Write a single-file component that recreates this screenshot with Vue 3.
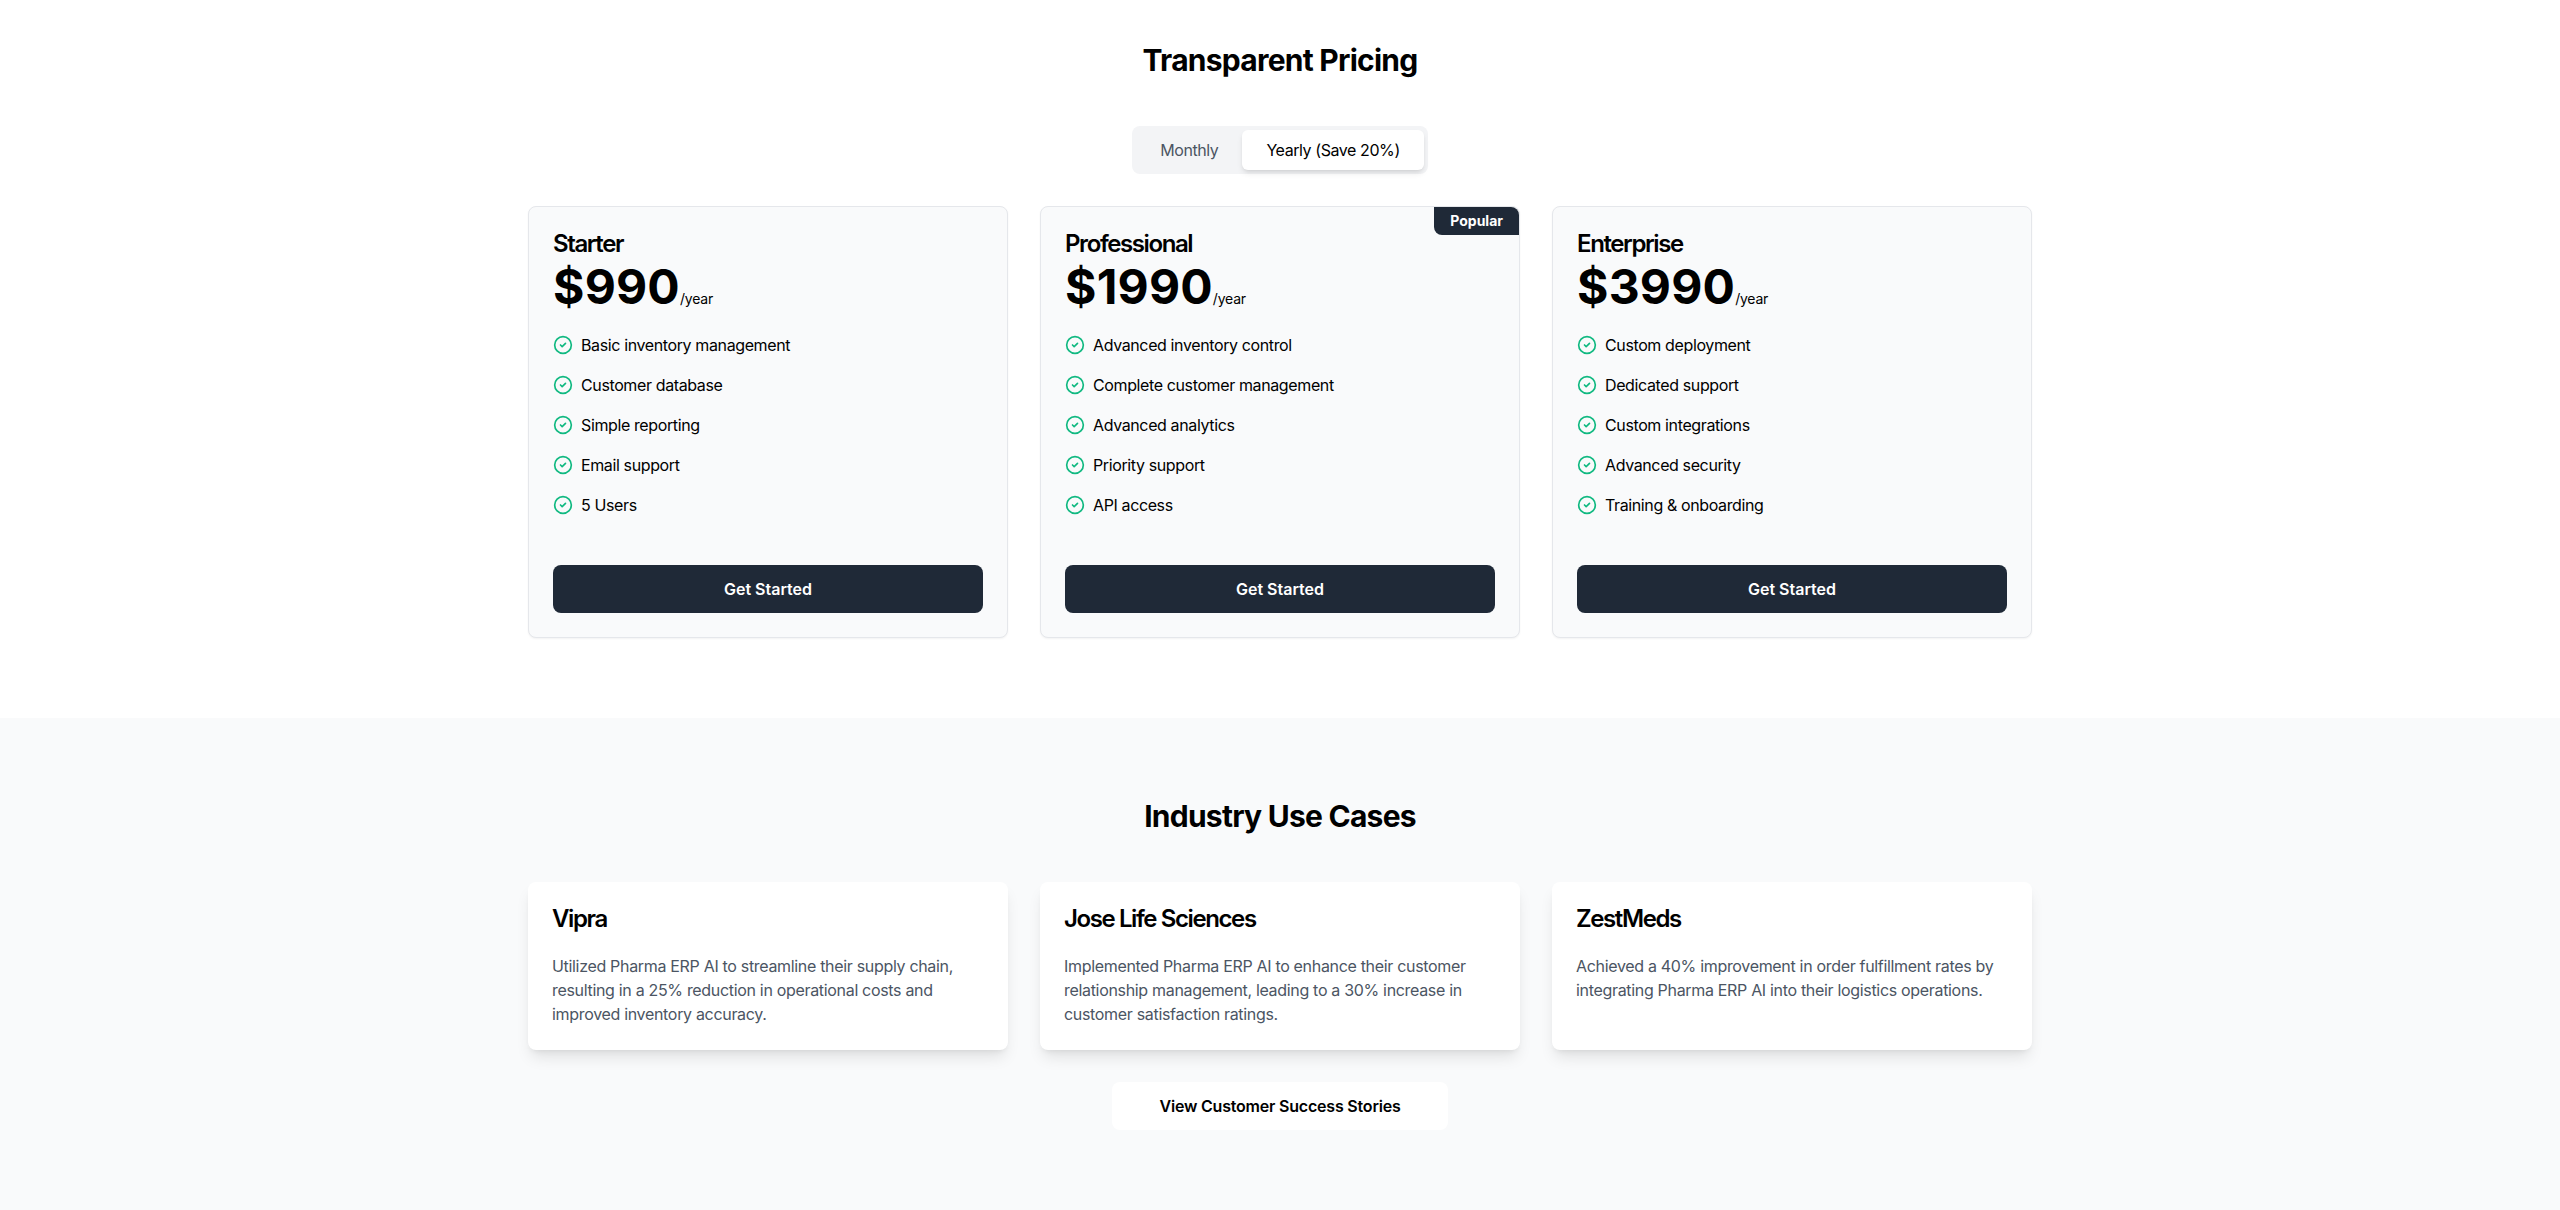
<script setup>
const plans = [
  {
    name: 'Starter',
    price: '$990',
    features: ['Basic inventory management', 'Customer database', 'Simple reporting', 'Email support', '5 Users'],
  },
  {
    name: 'Professional',
    price: '$1990',
    popular: true,
    features: ['Advanced inventory control', 'Complete customer management', 'Advanced analytics', 'Priority support', 'API access'],
  },
  {
    name: 'Enterprise',
    price: '$3990',
    features: ['Custom deployment', 'Dedicated support', 'Custom integrations', 'Advanced security', 'Training & onboarding'],
  },
]

const useCases = [
  {
    name: 'Vipra',
    text: 'Utilized Pharma ERP AI to streamline their supply chain, resulting in a 25% reduction in operational costs and improved inventory accuracy.',
  },
  {
    name: 'Jose Life Sciences',
    text: 'Implemented Pharma ERP AI to enhance their customer relationship management, leading to a 30% increase in customer satisfaction ratings.',
  },
  {
    name: 'ZestMeds',
    text: 'Achieved a 40% improvement in order fulfillment rates by integrating Pharma ERP AI into their logistics operations.',
  },
]
</script>

<template>
  <div class="page">
    <section class="pricing">
      <div class="container">
        <h2 class="section-title">Transparent Pricing</h2>
        <div class="toggle-row">
          <div class="toggle">
            <button class="toggle__btn">Monthly</button>
            <button class="toggle__btn toggle__btn--active">Yearly (Save 20%)</button>
          </div>
        </div>
        <div class="grid">
          <div v-for="plan in plans" :key="plan.name" class="plan">
            <div v-if="plan.popular" class="plan__badge">Popular</div>
            <h3 class="plan__name">{{ plan.name }}</h3>
            <div class="plan__price">
              <span class="plan__amount">{{ plan.price }}</span><span class="plan__period">/year</span>
            </div>
            <ul class="plan__features">
              <li v-for="feature in plan.features" :key="feature" class="plan__feature">
                <svg class="check" viewBox="0 0 24 24" fill="none" stroke="currentColor" stroke-width="2" stroke-linecap="round" stroke-linejoin="round">
                  <circle cx="12" cy="12" r="10" />
                  <path d="m9 12 2 2 4-4" />
                </svg>
                <span>{{ feature }}</span>
              </li>
            </ul>
            <button class="plan__cta">Get Started</button>
          </div>
        </div>
      </div>
    </section>

    <section class="cases">
      <div class="container">
        <h2 class="section-title">Industry Use Cases</h2>
        <div class="grid">
          <div v-for="item in useCases" :key="item.name" class="case">
            <h3 class="case__name">{{ item.name }}</h3>
            <p class="case__text">{{ item.text }}</p>
          </div>
        </div>
        <div class="cases__more">
          <button class="more-btn">View Customer Success Stories</button>
        </div>
      </div>
    </section>
  </div>
</template>

<style scoped>
.page {
  font-family: Inter, 'Liberation Sans', sans-serif;
  color: #000;
  background: #fff;
}

.container {
  width: 1504px;
  margin: 0 auto;
}

.pricing {
  padding: 42px 0 80px;
}

.cases {
  padding: 80px 0;
  background: #f9fafb;
}

.section-title {
  margin: 0 0 48px;
  font-size: 30px;
  line-height: 36px;
  font-weight: 700;
  letter-spacing: -0.75px;
  text-align: center;
}

.toggle-row {
  display: flex;
  justify-content: center;
  margin-bottom: 32px;
}

.toggle {
  display: flex;
  padding: 4px;
  background: #f3f4f6;
  border-radius: 8px;
}

.toggle__btn {
  height: 40px;
  padding: 0 24px;
  border: 0;
  border-radius: 6px;
  background: transparent;
  font: inherit;
  font-size: 16px;
  letter-spacing: -0.42px;
  color: #4b5563;
}

.toggle__btn--active {
  background: #fff;
  color: #000;
  box-shadow: 0 4px 6px -1px rgba(0, 0, 0, 0.1), 0 2px 4px -2px rgba(0, 0, 0, 0.1);
}

.grid {
  display: grid;
  grid-template-columns: repeat(3, 1fr);
  gap: 32px;
}

.plan {
  position: relative;
  display: flex;
  flex-direction: column;
  padding: 24px;
  background: #f9fafb;
  border: 1px solid #e5e7eb;
  border-radius: 8px;
  box-shadow: 0 1px 2px rgba(0, 0, 0, 0.05);
}

.plan__badge {
  position: absolute;
  top: 0;
  right: 0;
  padding: 6px 16px;
  background: #1f2937;
  color: #fff;
  font-size: 14px;
  line-height: 16px;
  font-weight: 700;
  border-radius: 0 8px 0 8px;
}

.plan__name {
  margin: 0 0 6px;
  font-size: 24px;
  line-height: 26px;
  font-weight: 600;
  letter-spacing: -1.4px;
}

.plan__price {
  height: 48px;
  margin-bottom: 22px;
}

.plan__amount {
  font-size: 48px;
  line-height: 48px;
  font-weight: 750;
  letter-spacing: 0.2px;
}

.plan__period {
  font-size: 14px;
  letter-spacing: -0.2px;
}

.plan__features {
  display: flex;
  flex-direction: column;
  gap: 16px;
  margin: 0 0 48px;
  padding: 0;
  list-style: none;
}

.plan__feature {
  display: flex;
  align-items: center;
  gap: 8px;
  font-size: 16px;
  line-height: 24px;
  letter-spacing: -0.38px;
}

.check {
  width: 20px;
  height: 20px;
  color: #10b981;
  flex-shrink: 0;
}

.plan__cta {
  height: 48px;
  border: 0;
  border-radius: 8px;
  background: #1f2937;
  color: #fff;
  font: inherit;
  font-size: 16px;
  font-weight: 600;
}

.case {
  padding: 24px;
  background: #fff;
  border-radius: 8px;
  box-shadow: 0 10px 15px -3px rgba(0, 0, 0, 0.1), 0 4px 6px -4px rgba(0, 0, 0, 0.1);
}

.case__name {
  margin: 0 0 22px;
  font-size: 24px;
  line-height: 26px;
  font-weight: 600;
  letter-spacing: -1.4px;
}

.case__text {
  margin: 0;
  font-size: 16px;
  line-height: 24px;
  letter-spacing: -0.32px;
  color: #4b5563;
}

.cases__more {
  display: flex;
  justify-content: center;
  margin-top: 32px;
}

.more-btn {
  height: 48px;
  padding: 0 47px;
  border: 0;
  border-radius: 8px;
  background: #fff;
  color: #000;
  font: inherit;
  font-size: 16px;
  font-weight: 600;
  letter-spacing: -0.2px;
}
</style>
